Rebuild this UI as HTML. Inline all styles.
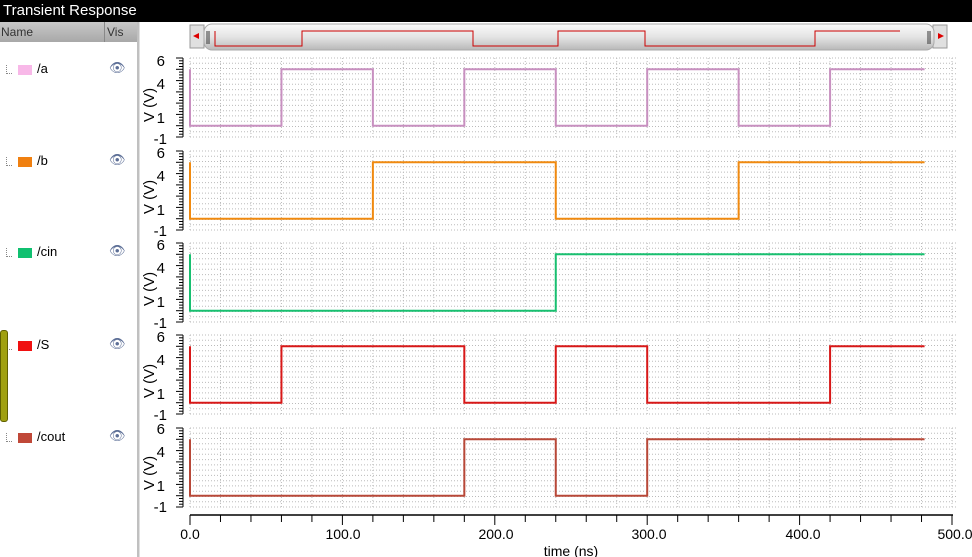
<!DOCTYPE html>
<html><head><meta charset="utf-8"><style>
body{margin:0;width:972px;height:557px;overflow:hidden;background:#fff;font-family:"Liberation Sans",sans-serif;position:relative}
#title{position:absolute;left:0;top:0;width:972px;height:22px;background:#000;color:#fff;font-size:15px;line-height:22px;padding-left:3px;box-sizing:border-box}
#left{position:absolute;left:0;top:22px;width:137px;height:535px;background:#fff;border-right:2px solid #c0c0c0}
#hdr{height:20px;background:linear-gradient(#c8c8c8,#a8a8a8);font-size:12px;color:#333;position:relative}
#hdr span{position:absolute;top:3px}
.it{position:absolute;left:6px;font-size:13px;color:#000}
.sw{display:inline-block;width:14px;height:10px;vertical-align:middle;margin:0 5px 0 6px}
.dot{display:inline-block;width:5px;height:8px;border-left:1px dotted #888;border-bottom:1px dotted #888;vertical-align:middle}
.eye{position:absolute;left:109px;font-size:13px;color:#5c6e96}
svg{position:absolute;left:0;top:0}
</style></head><body>
<div id="title">Transient Response</div>
<div id="left">
 <div id="hdr"><span style="left:1px">Name</span><span style="left:104px;border-left:1px solid #888;padding-left:2px;top:0;height:20px;line-height:20px">Vis</span></div>
</div>
<div class="it" style="top:61px"><span class="dot"></span><span class="sw" style="background:#f8b8e8"></span>/a</div>
<div class="it" style="top:153px"><span class="dot"></span><span class="sw" style="background:#f08010"></span>/b</div>
<div class="it" style="top:244px"><span class="dot"></span><span class="sw" style="background:#10c070"></span>/cin</div>
<div class="it" style="top:337px"><span class="dot"></span><span class="sw" style="background:#f01010"></span>/S</div>
<div class="it" style="top:429px"><span class="dot"></span><span class="sw" style="background:#c04838"></span>/cout</div>
<div style="position:absolute;left:0;top:330px;width:6px;height:90px;background:#a0a010;border-radius:3px;border:1px solid #606000"></div>
<svg id="s" width="972" height="557" xmlns="http://www.w3.org/2000/svg">
<defs><linearGradient id="g" x1="0" y1="0" x2="0" y2="1"><stop offset="0" stop-color="#fafafa"/><stop offset="0.5" stop-color="#e4e4e4"/><stop offset="1" stop-color="#b8b8b8"/></linearGradient></defs>
<rect x="190" y="25" width="14" height="23" fill="#e0e0e0" stroke="#999"/>
<polygon points="193,36 199,33 199,39" fill="#d00"/>
<rect x="933" y="25" width="14" height="23" fill="#e0e0e0" stroke="#999"/>
<polygon points="944,36 938,33 938,39" fill="#d00"/>
<rect x="204" y="24" width="730" height="26" rx="8" fill="url(#g)" stroke="#aaa"/>
<line x1="207" y1="31" x2="207" y2="44" stroke="#333"/><line x1="209" y1="31" x2="209" y2="44" stroke="#333"/>
<line x1="928" y1="31" x2="928" y2="44" stroke="#333"/><line x1="930" y1="31" x2="930" y2="44" stroke="#333"/>
<polyline points="215,31 215,46 302,46 302,31 473,31 473,46 558,46 558,31 645,31 645,46 815,46 815,31 900,31" fill="none" stroke="#c00" stroke-width="1"/>
<g font-size="15" fill="#000" text-anchor="end">
<text x="165" y="66">6</text><text x="165" y="89">4</text><text x="165" y="123">1</text><text x="167" y="144">-1</text>
<text x="165" y="158">6</text><text x="165" y="181">4</text><text x="165" y="215">1</text><text x="167" y="236">-1</text>
<text x="165" y="250">6</text><text x="165" y="273">4</text><text x="165" y="307">1</text><text x="167" y="328">-1</text>
<text x="165" y="342">6</text><text x="165" y="365">4</text><text x="165" y="399">1</text><text x="167" y="420">-1</text>
<text x="165" y="434">6</text><text x="165" y="457">4</text><text x="165" y="491">1</text><text x="167" y="512">-1</text>
</g>
<g font-size="15" fill="#000">
<text transform="translate(154,122) rotate(-90)">V (V)</text>
<text transform="translate(154,214) rotate(-90)">V (V)</text>
<text transform="translate(154,306) rotate(-90)">V (V)</text>
<text transform="translate(154,398) rotate(-90)">V (V)</text>
<text transform="translate(154,490) rotate(-90)">V (V)</text>
</g>
<g font-size="14" fill="#000" text-anchor="middle">
<text x="190" y="539">0.0</text><text x="343" y="539">100.0</text><text x="496" y="539">200.0</text><text x="649" y="539">300.0</text><text x="803" y="539">400.0</text><text x="955" y="539">500.0</text>
<text x="571" y="556">time (ns)</text>
</g>
<g id="gen"></g>
</svg>
<script>
var g=document.getElementById('gen'),h='';
var X=function(t){return 190+t*1.524};
var tops=[58,151,243,335,428];
var sig=[[1,[60,120,180,240,300,360,420],'#c890c0'],[0,[120,240,360],'#f08a10'],[0,[240],'#18c070'],[0,[60,180,240,300,420],'#d81818'],[0,[180,240,300],'#b84838']];
tops.forEach(function(T,i){
 var B=T+79;
 for(var k=0;k<=15;k++){var y=T+k*79/15;h+='<line x1="190" y1="'+y.toFixed(1)+'" x2="958" y2="'+y.toFixed(1)+'" stroke="#bbb" stroke-width="1" stroke-dasharray="1,2"/>';}
 for(var t=0;t<=500;t+=20){var x=X(t);h+='<line x1="'+x+'" y1="'+T+'" x2="'+x+'" y2="'+B+'" stroke="#bbb" stroke-dasharray="1,2"/>';}
 h+='<line x1="183" y1="'+T+'" x2="183" y2="'+B+'" stroke="#000"/>';
 for(var k=0;k<=28;k++){var y=T+k*79/28;var w=(k%4==0)?7:4;h+='<line x1="'+(183-w)+'" y1="'+y.toFixed(1)+'" x2="183" y2="'+y.toFixed(1)+'" stroke="#000"/>';}
 var hi=T+79/7*1, lo=T+79/7*6;
 var s=sig[i],pts=X(0)+','+hi+' '+X(0)+','+lo;
 var cur=0;
 s[1].forEach(function(t){var y1=cur?hi:lo;cur=1-cur;var y2=cur?hi:lo;pts+=' '+X(t)+','+y1+' '+X(t)+','+y2;});
 pts+=' '+X(482)+','+(cur?hi:lo);
 h+='<polyline points="'+pts+'" fill="none" stroke="'+s[2]+'" stroke-width="2"/>';
});
h+='<line x1="190" y1="515" x2="953" y2="515" stroke="#000" stroke-width="1.5"/>';
for(var t=0;t<=500;t+=20){var x=X(t);h+='<line x1="'+x+'" y1="515" x2="'+x+'" y2="'+(t%100==0?525:522)+'" stroke="#000"/>';}
h+='<line x1="138.5" y1="22" x2="138.5" y2="557" stroke="#c0c0c0" stroke-width="2"/>';
g.innerHTML=h;
</script>
<div class="eye" style="top:60px">👁</div>
<div class="eye" style="top:152px">👁</div>
<div class="eye" style="top:243px">👁</div>
<div class="eye" style="top:336px">👁</div>
<div class="eye" style="top:428px">👁</div>
</body></html>
